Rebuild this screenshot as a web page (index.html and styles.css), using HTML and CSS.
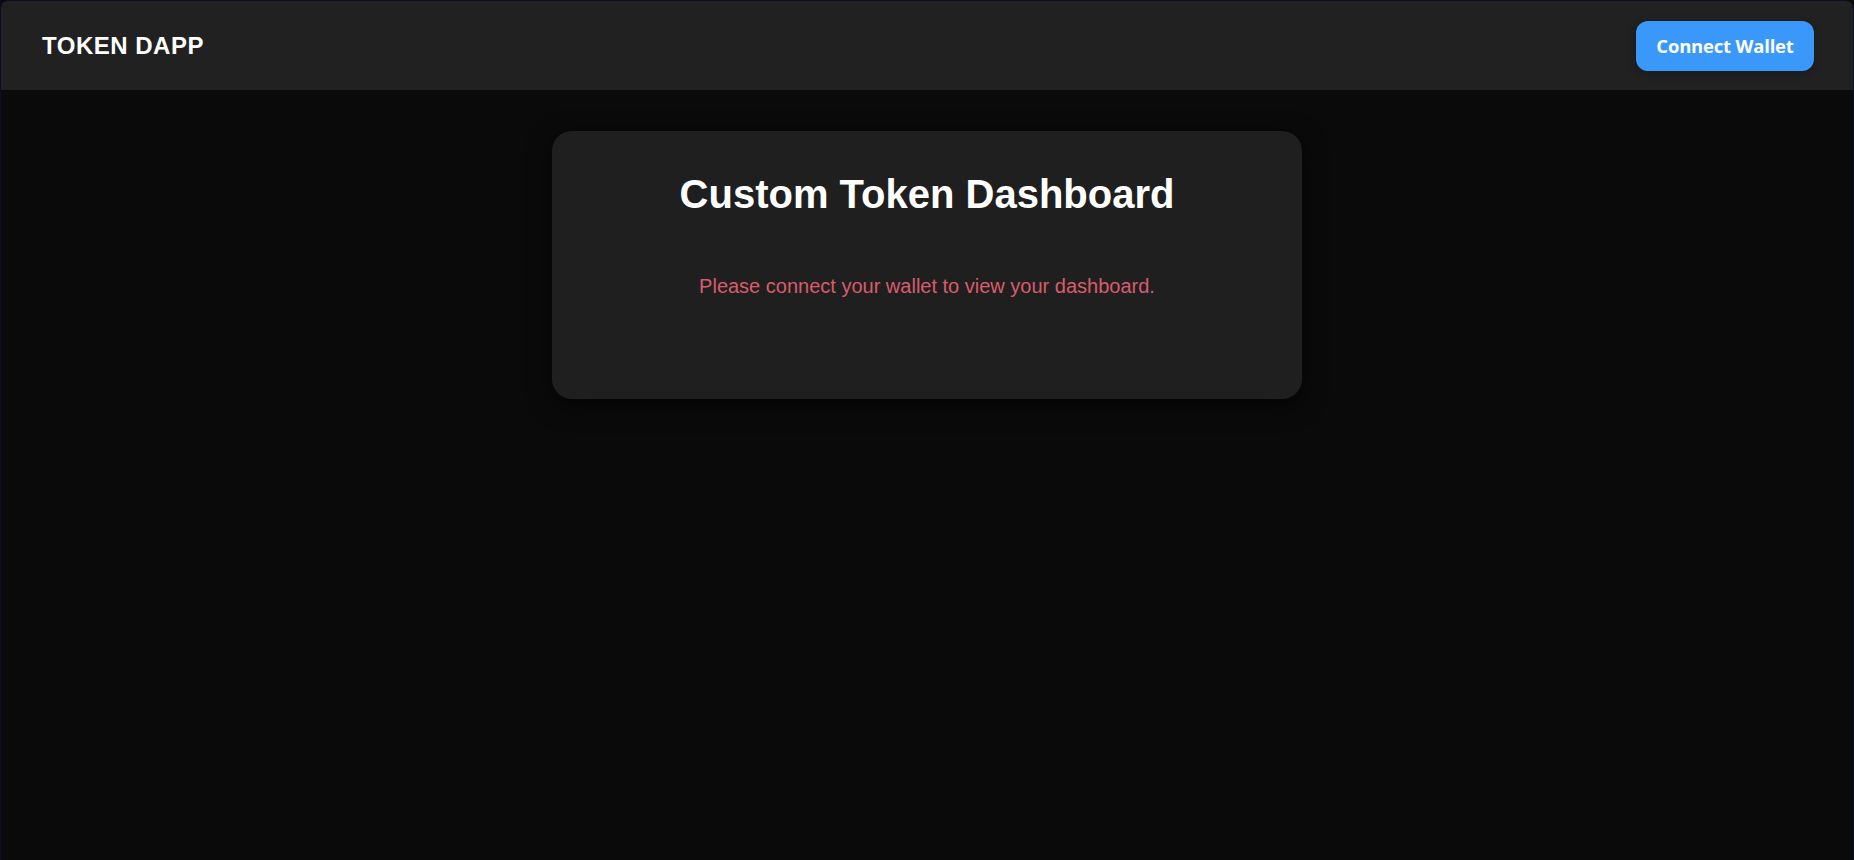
FILE: index.html
```html
<!DOCTYPE html>
<html lang="en">
<head>
<meta charset="utf-8">
<title>Token DApp</title>
<link rel="stylesheet" href="styles.css">
</head>
<body>
<div class="app">
  <header class="navbar">
    <div class="logo">TOKEN DAPP</div>
    <button class="connect-btn">Connect Wallet</button>
  </header>
  <main class="main">
    <section class="card">
      <h1 class="title">Custom Token Dashboard</h1>
      <p class="message">Please connect your wallet to view your dashboard.</p>
    </section>
  </main>
</div>
</body>
</html>
```
FILE: styles.css
```css
* { box-sizing: border-box; }
html, body {
  margin: 0;
  height: 100%;
  background: #0a0a0a;
}
body {
  font-family: "Liberation Sans", Arial, sans-serif;
  color: #ffffff;
}
.app {
  height: 100%;
  border: 1px solid #0b0e26;
  border-bottom: none;
  border-radius: 8px 8px 0 0;
  overflow: hidden;
  background: #0a0a0a;
}
.navbar {
  height: 89px;
  background: #212121;
  display: flex;
  align-items: center;
  justify-content: space-between;
  padding: 0 39px 0 41px;
}
.logo {
  font-size: 24px;
  font-weight: 700;
  letter-spacing: 0.5px;
  color: #ffffff;
}
.connect-btn {
  height: 50px;
  width: 178px;
  border: none;
  border-radius: 12px;
  background: #3a98fb;
  color: #ffffff;
  font-family: "Open Sans", "Noto Sans", sans-serif;
  font-weight: 700;
  font-size: 18.5px;
  letter-spacing: -0.2px;
  padding: 0;
  cursor: pointer;
  box-shadow: 0 2px 8px rgba(0,0,0,0.25);
}
.main {
  display: flex;
  justify-content: center;
  padding-top: 41px;
}
.card {
  width: 750px;
  height: 268px;
  background: #1f1f1f;
  border-radius: 20px;
  padding: 40px 40px;
  text-align: center;
  box-shadow: 0 6px 24px rgba(0,0,0,0.6);
}
.title {
  margin: 0;
  font-size: 40px;
  font-weight: 700;
  line-height: 46px;
  color: #ffffff;
}
.message {
  margin: 58px 0 0;
  font-size: 20px;
  line-height: 23px;
  color: #d95c6c;
}
```
